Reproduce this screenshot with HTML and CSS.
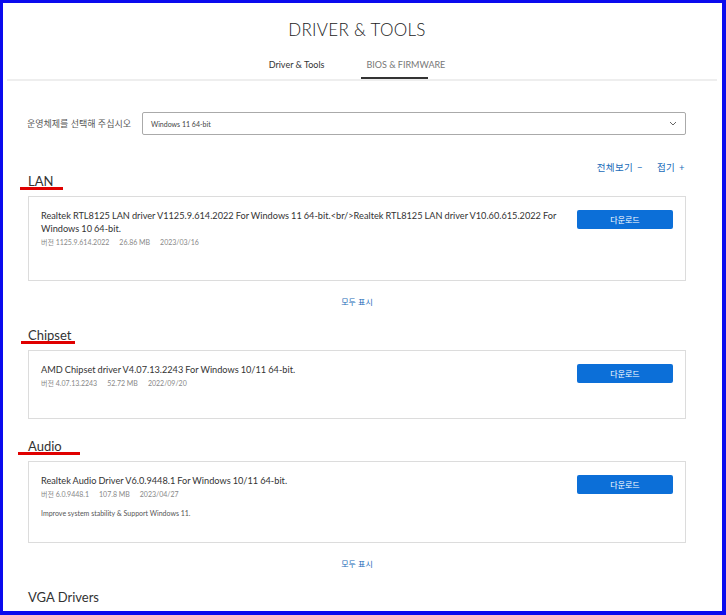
FILE: index.html
```html
<!DOCTYPE html>
<html lang="ko">
<head>
<meta charset="utf-8">
<title>Driver &amp; Tools</title>
<link rel="stylesheet" href="styles.css">
</head>
<body>
<div class="frame">
  <header class="page-head">
    <h1 class="title">DRIVER &amp; TOOLS</h1>
    <nav class="tabs">
      <a class="tab">Driver &amp; Tools</a>
      <a class="tab tab-active">BIOS &amp; FIRMWARE</a>
    </nav>
  </header>
  <div class="separator"></div>

  <main class="content">
    <div class="os-row">
      <label class="os-label">운영체제를 선택해 주십시오</label>
      <div class="os-select">
        <span>Windows 11 64-bit</span>
        <svg class="chevron" width="8" height="5" viewBox="0 0 8 5"><path d="M1 1l3 3 3-3" fill="none" stroke="#666" stroke-width="1"/></svg>
      </div>
    </div>

    <div class="expand-row">
      <a class="expand-link">전체보기 −</a>
      <a class="expand-link">접기 +</a>
    </div>

    <section class="section">
      <h2 class="cat">LAN<span class="mark mark-lan"></span></h2>
      <div class="card">
        <div class="info">
          <p class="name">Realtek RTL8125 LAN driver V1125.9.614.2022 For Windows 11 64-bit.&lt;br/&gt;Realtek RTL8125 LAN driver V10.60.615.2022 For Windows 10 64-bit.</p>
          <div class="meta"><span>버전 1125.9.614.2022</span><span>26.86 MB</span><span>2023/03/16</span></div>
          <p class="desc"></p>
        </div>
        <button class="dl">다운로드</button>
      </div>
      <a class="show-all">모두 표시</a>
    </section>

    <section class="section">
      <h2 class="cat">Chipset<span class="mark mark-chip"></span></h2>
      <div class="card card-short">
        <div class="info">
          <p class="name">AMD Chipset driver V4.07.13.2243 For Windows 10/11 64-bit.</p>
          <div class="meta"><span>버전 4.07.13.2243</span><span>52.72 MB</span><span>2022/09/20</span></div>
        </div>
        <button class="dl">다운로드</button>
      </div>
    </section>

    <section class="section">
      <h2 class="cat">Audio<span class="mark mark-audio"></span></h2>
      <div class="card">
        <div class="info">
          <p class="name">Realtek Audio Driver V6.0.9448.1 For Windows 10/11 64-bit.</p>
          <div class="meta"><span>버전 6.0.9448.1</span><span>107.8 MB</span><span>2023/04/27</span></div>
          <p class="desc">Improve system stability &amp; Support Windows 11.</p>
        </div>
        <button class="dl">다운로드</button>
      </div>
      <a class="show-all">모두 표시</a>
    </section>

    <section class="section">
      <h2 class="cat">VGA Drivers</h2>
    </section>
  </main>
</div>
</body>
</html>
```

FILE: styles.css
```css
* { box-sizing: border-box; }
html, body { margin: 0; padding: 0; }
body {
  font-family: Lato, "Noto Sans CJK KR", sans-serif;
  color: #333;
  background: #fff;
}
.frame {
  width: 726px;
  height: 615px;
  overflow: hidden;
  border-style: solid;
  border-color: #0b0bee;
  border-width: 3px 4px 4px 3px;
  background: #fff;
}
.page-head {
  padding: 16px 11px 0 0;
  text-align: center;
}
.title {
  margin: 0;
  font-size: 17px;
  line-height: 22px;
  font-weight: 300;
  color: #222;
  letter-spacing: 0.3px;
}
.tabs {
  margin-top: 17px;
  display: flex;
  justify-content: center;
  gap: 42px;
}
.tab {
  font-size: 9px;
  line-height: 14px;
  padding-bottom: 7px;
  color: #333;
  position: relative;
}
.tab-active { color: #777; }
.tab-active::after {
  content: "";
  position: absolute;
  left: -5px;
  width: 67px;
  bottom: 0;
  height: 2px;
  background: #333;
}
.separator {
  margin: 0 5px 0 4px;
  height: 2px;
  background: #eeeeee;
}
.content {
  padding: 0 36px 0 25px;
}
.os-row {
  margin-top: 31px;
  display: flex;
  align-items: center;
  gap: 11px;
}
.os-label {
  font-size: 9px;
  color: #555;
  white-space: nowrap;
  margin-left: -1px;
}
.os-select {
  flex: 1;
  height: 23px;
  border: 1px solid #aaa;
  border-radius: 2px;
  display: flex;
  align-items: center;
  justify-content: space-between;
  padding: 0 8px 0 8px;
  font-size: 7px;
  color: #444;
}
.expand-row {
  margin-top: 27px;
  display: flex;
  justify-content: flex-end;
  gap: 14px;
  line-height: 11px;
  height: 11px;
  font-size: 9.5px;
  letter-spacing: 0.4px;
  word-spacing: 1px;
  padding-right: 1px;
}
.expand-link, .show-all {
  color: #1a6bb8;
}
.section {
  margin-bottom: 19px;
}
.cat {
  margin: 0 0 7px 0;
  display: block;
  width: fit-content;
  position: relative;
  font-size: 13px;
  line-height: 16px;
  font-weight: 400;
  color: #333;
}
.mark {
  position: absolute;
  left: -8px;
  right: -10px;
  bottom: -1px;
  height: 3px;
  background: #e00000;
}
.mark-chip { left: -7px; right: -4px; }
.mark-audio { left: -10px; right: -18px; }
.card {
  border: 1px solid #dcdcdc;
  display: flex;
  justify-content: space-between;
  align-items: flex-start;
  padding: 12px 12px 24px 12px;
}
.card-short { padding-bottom: 29px; }
.info { flex: 1; }
.name {
  margin: 0;
  font-size: 9.2px;
  line-height: 13px;
  word-spacing: -0.3px;
  color: #333;
}
.meta {
  margin-top: 2px;
  display: flex;
  gap: 10px;
  font-size: 7px;
  line-height: 11px;
  color: #888;
}
.desc {
  margin: 8px 0 0 0;
  font-size: 7px;
  line-height: 10px;
  color: #555;
}
.dl {
  flex: none;
  width: 96px;
  height: 19px;
  margin-top: 1px;
  border: 0;
  border-radius: 2px;
  background: #0c6fd8;
  color: #fff;
  font-family: "Noto Sans CJK KR", sans-serif;
  font-size: 8px;
  padding: 0;
}
.show-all {
  display: block;
  text-align: center;
  margin-top: 15px;
  font-size: 8px;
  line-height: 12px;
}
```
